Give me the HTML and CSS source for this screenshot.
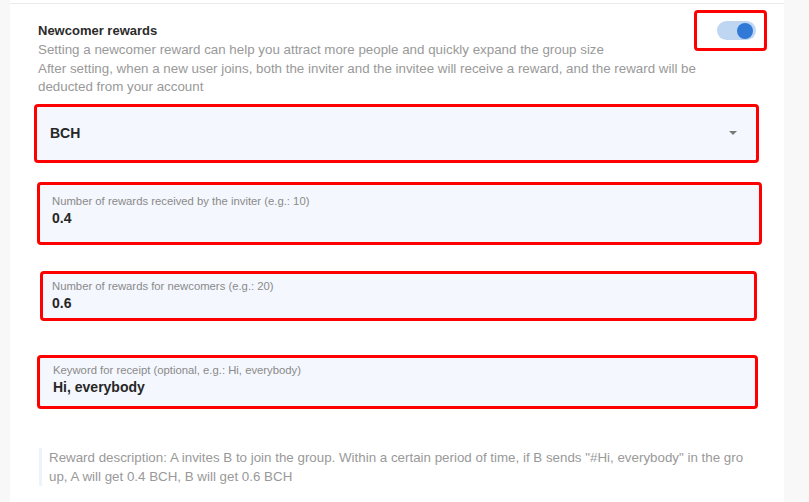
FILE: index.html
```html
<!DOCTYPE html>
<html lang="en">
<head>
<meta charset="utf-8">
<title>Newcomer rewards</title>
<link rel="stylesheet" href="styles.css">
</head>
<body>
<div class="page">
  <main class="panel">
    <section class="rewards">
      <div class="rewards__head">
        <h2 class="rewards__title">Newcomer rewards</h2>
        <div class="mark mark--toggle">
          <span class="toggle"><span class="toggle__knob"></span></span>
        </div>
      </div>
      <p class="rewards__desc">Setting a newcomer reward can help you attract more people and quickly expand the group size<br>After setting, when a new user joins, both the inviter and the invitee will receive a reward, and the reward will be deducted from your account</p>

      <div class="field field--select">
        <span class="field__value">BCH</span>
        <span class="caret"></span>
      </div>

      <div class="field field--inviter">
        <span class="field__label">Number of rewards received by the inviter (e.g.: 10)</span>
        <span class="field__value">0.4</span>
      </div>

      <div class="field field--newcomer">
        <span class="field__label">Number of rewards for newcomers (e.g.: 20)</span>
        <span class="field__value">0.6</span>
      </div>

      <div class="field field--keyword">
        <span class="field__label">Keyword for receipt (optional, e.g.: Hi, everybody)</span>
        <span class="field__value">Hi, everybody</span>
      </div>

      <p class="note">Reward description: A invites B to join the group. Within a certain period of time, if B sends "#Hi, everybody" in the group, A will get 0.4 BCH, B will get 0.6 BCH</p>
    </section>
  </main>
</div>
</body>
</html>
```

FILE: styles.css
```css
* { box-sizing: border-box; }
html, body { margin: 0; padding: 0; }
body {
  background: #f8f8f8;
  font-family: "Liberation Sans", Arial, sans-serif;
  color: #222;
  width: 809px;
  height: 502px;
  overflow: hidden;
}
.page {
  padding-left: 10px;
  width: 784px;
}
.panel {
  background: #fff;
  height: 502px;
  padding-top: 3px;
}
.rewards {
  border-top: 1px solid #ebebeb;
  padding: 17px 17px 0 28px;
}
.rewards__head {
  display: flex;
  align-items: center;
  justify-content: space-between;
  height: 19px;
}
.rewards__title {
  margin: 0;
  font-size: 13px;
  font-weight: 700;
  line-height: 19px;
  color: #2b2b2b;
}
.mark {
  border: 3px solid #ff0000;
  border-radius: 4px;
}
.mark--toggle {
  width: 73px;
  height: 41px;
  margin: -11px 0 -11px;
  display: flex;
  align-items: center;
  justify-content: flex-end;
  padding-right: 8px;
}
.toggle {
  width: 39px;
  height: 19px;
  border-radius: 10px;
  background: #bfd6f3;
  display: flex;
  align-items: center;
  justify-content: flex-end;
  padding-right: 3px;
}
.toggle__knob {
  width: 16px;
  height: 16px;
  border-radius: 50%;
  background: #3179d6;
}
.rewards__desc {
  margin: 1px 0 0;
  max-width: 680px;
  font-size: 13.35px;
  line-height: 18.5px;
  color: #999;
}
.field {
  border: 3px solid #ff0000;
  border-radius: 4px;
  background: #f4f7fd;
  display: flex;
  flex-direction: column;
}
.field--select {
  flex-direction: row;
  align-items: center;
  justify-content: space-between;
  margin: 7px 0 0 -4px;
  width: 725px;
  height: 59px;
  padding: 0 19px 0 13px;
}
.field--inviter {
  margin: 19px 0 0 -1px;
  width: 725px;
  height: 63px;
  padding: 9px 12px 0;
}
.field--newcomer {
  margin: 26px 0 0 2px;
  width: 717px;
  height: 50px;
  padding: 5px 9px 0;
}
.field--keyword {
  margin: 34px 0 0 -1px;
  width: 721px;
  height: 54px;
  padding: 5px 13px 0;
}
.field__label {
  font-size: 11.3px;
  line-height: 14px;
  color: #8a8a8a;
}
.field__value {
  font-size: 14px;
  font-weight: 700;
  line-height: 20px;
  color: #262626;
}
.caret {
  width: 0;
  height: 0;
  border-left: 4px solid transparent;
  border-right: 4px solid transparent;
  border-top: 4px solid #7a7a7a;
}
.note {
  margin: 39px 0 0 1px;
  width: 706px;
  border-left: 3px solid #eef2fa;
  padding: 0 0 0 7px;
  font-size: 13.35px;
  line-height: 19px;
  color: #999;
  word-break: break-all;
}
```
